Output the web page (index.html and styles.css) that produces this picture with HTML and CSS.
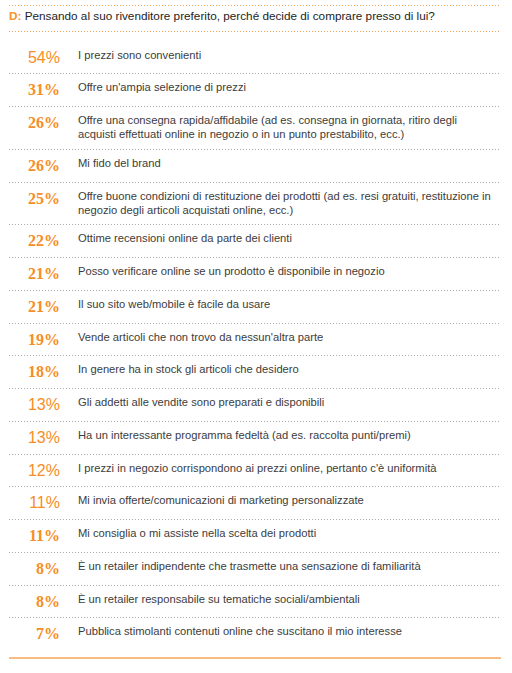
FILE: index.html
```html
<!DOCTYPE html>
<html lang="it">
<head>
    <meta charset="UTF-8">
    <meta name="viewport" content="width=device-width, initial-scale=1.0">
    <title>Rivenditore preferito</title>
    <link rel="stylesheet" href="styles.css">
</head>
<body>

<div class="survey">
    <div class="question"><span class="q-label">D:</span> Pensando al suo rivenditore preferito, perché decide di comprare presso di lui?</div>

    <!-- Answers -->
    <ul class="answers">
        <li class="answer"><span class="pct sans">54%</span><span class="text">I prezzi sono convenienti</span></li>
        <li class="answer"><span class="pct serif">31%</span><span class="text">Offre un'ampia selezione di prezzi</span></li>
        <li class="answer"><span class="pct serif">26%</span><span class="text">Offre una consegna rapida/affidabile (ad es. consegna in giornata, ritiro degli<br>acquisti effettuati online in negozio o in un punto prestabilito, ecc.)</span></li>
        <li class="answer"><span class="pct serif">26%</span><span class="text">Mi fido del brand</span></li>
        <li class="answer"><span class="pct serif">25%</span><span class="text">Offre buone condizioni di restituzione dei prodotti (ad es. resi gratuiti, restituzione in<br>negozio degli articoli acquistati online, ecc.)</span></li>
        <li class="answer"><span class="pct serif">22%</span><span class="text">Ottime recensioni online da parte dei clienti</span></li>
        <li class="answer"><span class="pct serif">21%</span><span class="text">Posso verificare online se un prodotto è disponibile in negozio</span></li>
        <li class="answer"><span class="pct serif">21%</span><span class="text">Il suo sito web/mobile è facile da usare</span></li>
        <li class="answer"><span class="pct serif">19%</span><span class="text">Vende articoli che non trovo da nessun'altra parte</span></li>
        <li class="answer"><span class="pct serif">18%</span><span class="text">In genere ha in stock gli articoli che desidero</span></li>
        <li class="answer"><span class="pct sans">13%</span><span class="text">Gli addetti alle vendite sono preparati e disponibili</span></li>
        <li class="answer"><span class="pct sans">13%</span><span class="text">Ha un interessante programma fedeltà (ad es. raccolta punti/premi)</span></li>
        <li class="answer"><span class="pct sans">12%</span><span class="text">I prezzi in negozio corrispondono ai prezzi online, pertanto c'è uniformità</span></li>
        <li class="answer"><span class="pct sans">11%</span><span class="text">Mi invia offerte/comunicazioni di marketing personalizzate</span></li>
        <li class="answer"><span class="pct serif">11%</span><span class="text">Mi consiglia o mi assiste nella scelta dei prodotti</span></li>
        <li class="answer"><span class="pct serif">8%</span><span class="text">È un retailer indipendente che trasmette una sensazione di familiarità</span></li>
        <li class="answer"><span class="pct serif">8%</span><span class="text">È un retailer responsabile su tematiche sociali/ambientali</span></li>
        <li class="answer"><span class="pct serif">7%</span><span class="text">Pubblica stimolanti contenuti online che suscitano il mio interesse</span></li>
    </ul>
</div>

</body>
</html>
```

FILE: styles.css
```css
body {
    margin: 0;
    font-family: "Liberation Sans", Arial, sans-serif;
    background: #fff;
}
.survey {
    padding: 0 11px 0 9px;
}
.question {
    margin-top: 5px;
    padding: 3.5px 0 9px;
    font-size: 11.75px;
    line-height: 14px;
    color: #1e1e1e;
    /* dotted orange rules above and below */
    background-image: linear-gradient(to right, #f2a252 1px, transparent 1px),
                      linear-gradient(to right, #f2a252 1px, transparent 1px);
    background-size: 3px 1px;
    background-repeat: repeat-x;
    background-position: left top, left bottom;
}
.q-label {
    color: #f7912b;
    font-weight: bold;
}
.answers {
    list-style: none;
    margin: 0;
    padding: 9px 0 7px;
    border-bottom: 2px solid #f8bc82;
}
.answer {
    display: flex;
    align-items: flex-start;
    padding: 7px 0 7.75px;
    background-image: linear-gradient(to right, #a9a9a9 1px, transparent 1px);
    background-size: 3px 1px;
    background-repeat: repeat-x;
    background-position: left top;
}
.answer:first-child {
    background-image: none;
}
.pct {
    flex-shrink: 0;
    width: 51px;
    margin-top: 2px;
    text-align: right;
    font-size: 16px;
    line-height: 16px;
    color: #f78d26;
}
.pct.serif {
    font-family: "Liberation Serif", "Times New Roman", serif;
    font-weight: bold;
}
.pct.sans {
    font-family: "Liberation Sans", Arial, sans-serif;
}
.text {
    margin-left: 18px;
    font-size: 11.2px;
    line-height: 14px;
    color: #3c3c3c;
}
```
